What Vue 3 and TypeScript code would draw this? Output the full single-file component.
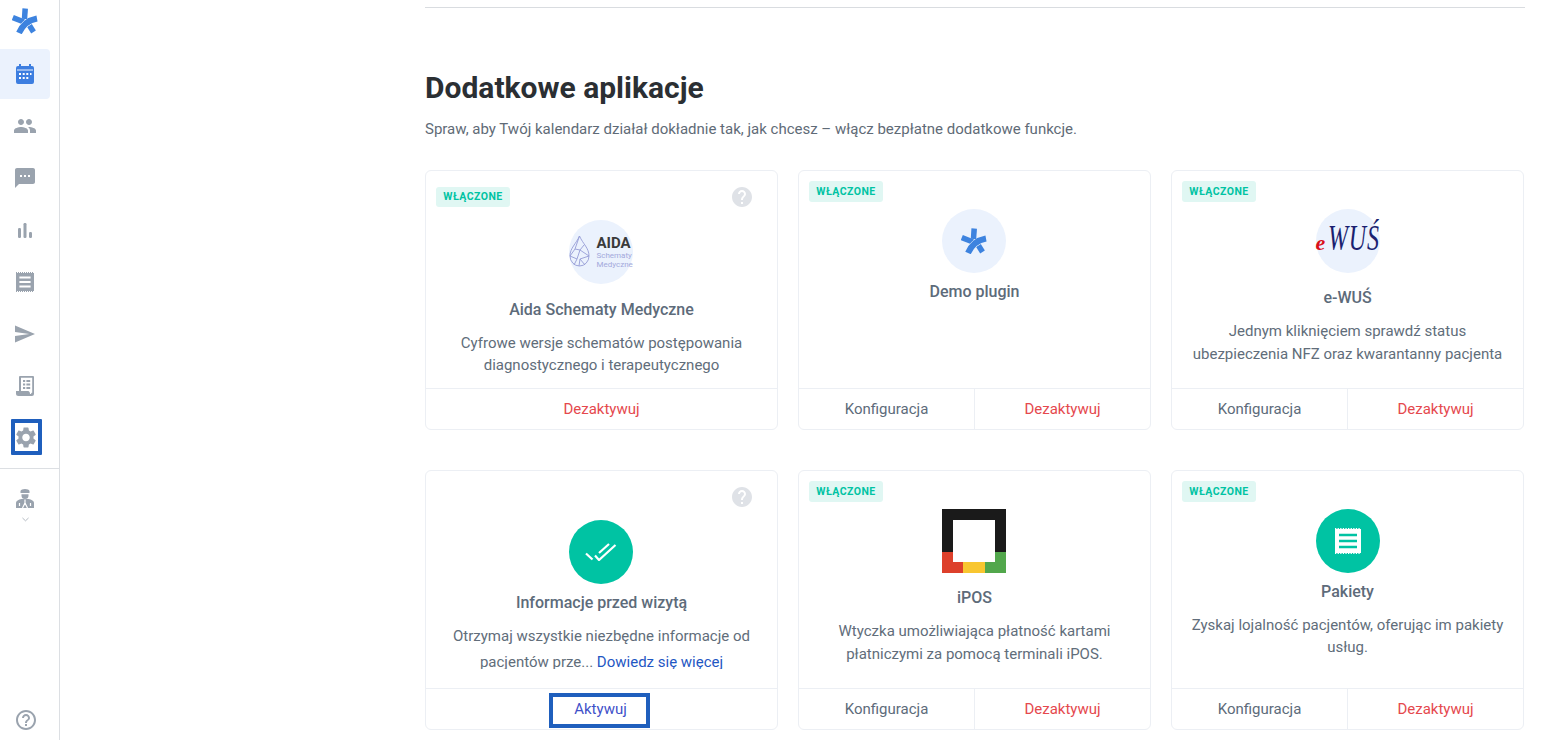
<script setup lang="ts">
interface Plugin {
  key: string;
  title: string;
  desc?: string;
  enabled: boolean;
  help: boolean;
  config: boolean;
}
const star = {
  stem: "M13.200 .5 12.500 11",
  arm: "M.8 9.500 12 14",
  swoosh: "M25 10.500C17 12 10.500 17 7 25",
  stub: "M17.500 17.500 21.500 24",
};
const plugins: Plugin[] = [
  { key: "aida", title: "Aida Schematy Medyczne", desc: "Cyfrowe wersje schematów postępowania diagnostycznego i terapeutycznego", enabled: true, help: true, config: false },
  { key: "demo", title: "Demo plugin", enabled: true, help: false, config: true },
  { key: "ewus", title: "e-WUŚ", desc: "Jednym kliknięciem sprawdź status ubezpieczenia NFZ oraz kwarantanny pacjenta", enabled: true, help: false, config: true },
  { key: "info", title: "Informacje przed wizytą", enabled: false, help: true, config: false },
  { key: "ipos", title: "iPOS", desc: "Wtyczka umożliwiająca płatność kartami płatniczymi za pomocą terminali iPOS.", enabled: true, help: false, config: true },
  { key: "pak", title: "Pakiety", desc: "Zyskaj lojalność pacjentów, oferując im pakiety usług.", enabled: true, help: false, config: true },
];
</script>

<template>
  <div class="page">
    <aside class="side">
      <svg class="logo" viewBox="0 0 26 26" width="26" height="26" fill="none" stroke="#3d83df" stroke-width="5.500">
        <path :d="star.stem" /><path :d="star.arm" /><path :d="star.stub" />
        <path :d="star.swoosh" stroke="#fff" stroke-width="6.800" />
        <path :d="star.swoosh" stroke-width="6" />
      </svg>
      <nav class="nav">
        <div class="item active">
          <svg viewBox="0 0 18 20" width="18" height="20">
            <path fill="#3d7ee0" d="M3 0h2v2h8V0h2v2h1a2 2 0 0 1 2 2v14a2 2 0 0 1-2 2H2a2 2 0 0 1-2-2V4a2 2 0 0 1 2-2h1z" />
            <path stroke="#fff" stroke-width=".9" d="M1 6h16" />
            <path fill="#fff" d="M3 9h2v2H3zM6.700 9h2v2h-2zM10.300 9h2v2h-2zM14 9h1.500v2H14zM3 13h2v2H3zM6.700 13h2v2h-2zM10.300 13h2v2h-2z" />
          </svg>
        </div>
        <div class="item">
          <svg viewBox="1 5 22 14" width="22" height="14"><path fill="#9aa3ae" d="M16 11c1.66 0 2.99-1.34 2.99-3S17.66 5 16 5c-1.66 0-3 1.34-3 3s1.34 3 3 3zm-8 0c1.66 0 2.99-1.34 2.99-3S9.66 5 8 5C6.34 5 5 6.34 5 8s1.34 3 3 3zm0 2c-2.33 0-7 1.17-7 3.5V19h14v-2.5c0-2.33-4.67-3.5-7-3.5zm8 0c-.29 0-.62.02-.97.05 1.16.84 1.97 1.97 1.97 3.45V19h6v-2.5c0-2.33-4.67-3.5-7-3.5z" /></svg>
        </div>
        <div class="item">
          <svg viewBox="2 2 20 20" width="20" height="20"><path fill="#9aa3ae" d="M20 2H4c-1.1 0-1.99.9-1.99 2L2 22l4-4h14c1.1 0 2-.9 2-2V4c0-1.1-.9-2-2-2zM9 11H7V9h2v2zm4 0h-2V9h2v2zm4 0h-2V9h2v2z" /></svg>
        </div>
        <div class="item">
          <svg viewBox="0 0 14 15" width="14" height="15" fill="#9aa3ae"><rect x="0" y="5" width="3" height="10" rx="1.200" /><rect x="5.500" y="0" width="3" height="15" rx="1.200" /><rect x="11" y="9" width="3" height="6" rx="1.200" /></svg>
        </div>
        <div class="item">
          <svg viewBox="0 0 18 20" width="18" height="20">
            <rect x="0" y="1" width="18" height="18" fill="#9aa3ae" />
            <path d="M0 .6h18M0 19.400h18" stroke="#9aa3ae" stroke-width="1.200" stroke-dasharray="1 1" />
            <path d="M3.400 5.500h11.200M3.400 10h11.200M3.400 14.500h11.200" stroke="#fff" stroke-width="2" />
          </svg>
        </div>
        <div class="item">
          <svg viewBox="2 3 21 18" width="20" height="18"><path fill="#9aa3ae" d="M2.010 21 23 12 2.010 3 2 10l15 2-15 2z" /></svg>
        </div>
        <div class="item">
          <svg viewBox="0 0 18 20" width="18" height="20">
            <path fill="#9aa3ae" d="M4 0h13a1 1 0 0 1 1 1v17a2 2 0 0 1-2 2H2.500A2.500 2.500 0 0 1 0 17.500V15h3V1a1 1 0 0 1 1-1z" />
            <path fill="#fff" d="M5 1.800h11.200v15c-.8 0-1 .3-1.200 1.200H14c0-1.600-.6-3-2-3H5z" />
            <path fill="#9aa3ae" d="M7 4h2.200v2H7zM10.400 4h3.800v2h-3.800zM7 7.500h2.200v2H7zM10.400 7.500h3.800v2h-3.800zM7 11h2.200v2H7zM10.400 11h3.800v2h-3.800z" />
          </svg>
        </div>
        <div class="item gear">
          <div class="mark">
            <svg viewBox="2.400 2 19.200 20" width="20" height="21"><path fill="#9aa3ae" d="M19.140 12.940c.04-.3.06-.61.06-.94 0-.32-.02-.64-.07-.94l2.030-1.580a.49.49 0 0 0 .12-.61l-1.920-3.320a.488.488 0 0 0-.59-.22l-2.390.96c-.5-.38-1.030-.7-1.620-.94l-.36-2.540a.484.484 0 0 0-.48-.41h-3.840c-.24 0-.43.17-.47.41l-.36 2.540c-.59.24-1.130.57-1.620.94l-2.390-.96c-.22-.08-.47 0-.59.22L2.740 8.870c-.12.21-.08.47.12.61l2.030 1.580c-.05.3-.09.63-.09.94s.02.64.07.94l-2.030 1.580a.49.49 0 0 0-.12.61l1.920 3.320c.12.22.37.29.59.22l2.390-.96c.5.38 1.030.7 1.620.94l.36 2.540c.05.24.24.41.48.41h3.840c.24 0 .44-.17.47-.41l.36-2.540c.59-.24 1.130-.56 1.620-.94l2.390.96c.22.08.47 0 .59-.22l1.920-3.320c.12-.22.07-.47-.12-.61l-2.010-1.580zM12 15.600c-1.980 0-3.600-1.620-3.600-3.600s1.620-3.600 3.600-3.600 3.600 1.620 3.600 3.600-1.620 3.600-3.600 3.600z" /></svg>
          </div>
        </div>
      </nav>
      <div class="account">
        <svg viewBox="0 0 18 19" width="18" height="19">
          <path fill="#9aa3ae" d="M4.500 4V2C4.500.8 7 0 9 0s4.500.8 4.500 2v2z" />
          <path fill="#9aa3ae" d="M5.500 5.200h7V6.500a3.500 3.500 0 0 1-7 0z" />
          <path fill="#9aa3ae" d="M0 19v-5c0-2 2.500-3.600 5.500-4h7c3 .4 5.500 2 5.500 4v5z" />
          <path fill="none" stroke="#fff" stroke-width="1.200" d="M9 10.500V14M9 14l-2.500 5M9 14l2.500 5M3.500 14v3M14.500 14v3" />
        </svg>
        <svg class="chev" viewBox="0 0 8 5" width="7" height="5" fill="none" stroke="#a9b0b9"><path d="M.5 .7 4 4l3.500-3.300" /></svg>
      </div>
      <svg class="help-out" viewBox="2 2 20 20" width="20" height="20"><path fill="#9aa3ae" d="M11 18h2v-2h-2v2zm1-16C6.480 2 2 6.480 2 12s4.480 10 10 10 10-4.480 10-10S17.520 2 12 2zm0 18c-4.410 0-8-3.590-8-8s3.590-8 8-8 8 3.590 8 8-3.590 8-8 8zm0-14c-2.210 0-4 1.790-4 4h2c0-1.100.9-2 2-2s2 .9 2 2c0 2-3 1.750-3 5h2c0-2.250 3-2.500 3-5 0-2.210-1.790-4-4-4z" /></svg>
    </aside>

    <main class="main">
      <hr class="rule" />
      <h1>Dodatkowe aplikacje</h1>
      <p class="lead">Spraw, aby Twój kalendarz działał dokładnie tak, jak chcesz – włącz bezpłatne dodatkowe funkcje.</p>
      <section class="grid">
        <article v-for="p in plugins" :key="p.key" class="card" :class="'c-' + p.key">
          <span v-if="p.enabled" class="badge">WŁĄCZONE</span>
          <svg v-if="p.help" class="help" viewBox="2 2 20 20" width="20" height="20"><path fill="#dfe2e7" d="M12 2C6.480 2 2 6.480 2 12s4.480 10 10 10 10-4.480 10-10S17.520 2 12 2zm1 17h-2v-2h2v2zm2.070-7.750-.9.92C13.450 12.900 13 13.500 13 15h-2v-.5c0-1.100.45-2.100 1.170-2.830l1.240-1.260c.37-.36.59-.86.59-1.410 0-1.100-.9-2-2-2s-2 .9-2 2H8c0-2.210 1.790-4 4-4s4 1.790 4 4c0 .88-.36 1.680-.93 2.250z" /></svg>
          <div class="body">
            <div class="icon">
              <template v-if="p.key === 'aida'">
                <svg class="drop" viewBox="0 0 21 32" width="21" height="32" fill="none" stroke="#959cd6" stroke-width=".9">
                  <path d="M10.500 1C7 9 1 13 1 21a9.500 10 0 0 0 19 0C20 13 14 9 10.500 1z" />
                  <path d="M10.500 1 6 14l-5 7 7 3 3-9 9 6-9 3-1 7M6 14l5 1 4-5M8 24l-3 6M11 24l5 6" />
                </svg>
                <div class="aida-txt"><b>AIDA</b><span>Schematy</span><span>Medyczne</span></div>
              </template>
              <svg v-else-if="p.key === 'demo'" viewBox="0 0 26 26" width="26" height="26" fill="none" stroke="#3d83df" stroke-width="5.500">
                <path :d="star.stem" /><path :d="star.arm" /><path :d="star.stub" />
                <path :d="star.swoosh" stroke="#ebf2fd" stroke-width="6.800" />
                <path :d="star.swoosh" stroke-width="6" />
              </svg>
              <div v-else-if="p.key === 'ewus'" class="ewus"><i class="e">e</i><i class="wus">WUŚ</i></div>
              <svg v-else-if="p.key === 'info'" viewBox="0 0 32 18" width="32" height="18" fill="none" stroke="#fff" stroke-width="2.200">
                <path d="M1 10.500 7.500 16.500" /><path d="M10 12.500 14 17 30.500 2" /><path d="M14 10 24 1" />
              </svg>
              <svg v-else-if="p.key === 'ipos'" viewBox="0 0 64 64" width="64" height="64">
                <path fill="#1a1a1a" d="M0 0h64v43H53V11H11v32H0z" />
                <path fill="#dd402b" d="M0 43h11v10h10v11H0z" />
                <path fill="#f8c630" d="M21 53h22v11H21z" />
                <path fill="#52a74c" d="M53 43h11v21H43V53h10z" />
              </svg>
              <svg v-else viewBox="0 0 26 26" width="26" height="26">
                <rect x="0" y="1" width="26" height="24" fill="#fff" />
                <path d="M0 .6h26M0 25.400h26" stroke="#fff" stroke-width="1.200" stroke-dasharray="1.300 1.300" />
                <path d="M4 7h18M4 13h18M4 19h18" stroke="#00c3a3" stroke-width="2.400" />
              </svg>
            </div>
            <h2>{{ p.title }}</h2>
            <p v-if="p.desc" class="desc">{{ p.desc }}</p>
            <div v-else-if="p.key === 'info'" class="clip">
              <p>Otrzymaj wszystkie niezbędne informacje od pacjentów prze... <a>Dowiedz się więcej</a></p>
            </div>
          </div>
          <footer class="foot">
            <template v-if="p.enabled">
              <a v-if="p.config" class="act conf">Konfiguracja</a>
              <a class="act off">Dezaktywuj</a>
            </template>
            <a v-else class="act on"><span class="mark2">Aktywuj</span></a>
          </footer>
        </article>
      </section>
    </main>
  </div>
</template>

<style>
html, body { margin: 0; overflow: hidden; background: #fff; }
</style>

<style scoped>
.page { display: flex; height: 740px; overflow: hidden; font-family: Roboto, "Liberation Sans", sans-serif; color: #5d6b7a; }
.side { width: 59px; flex: none; border-right: 1px solid #dcdfe3; display: flex; flex-direction: column; align-items: stretch; }
.logo { display: block; margin: 8px 0 15px 12px; }
.nav { display: flex; flex-direction: column; border-bottom: 1px solid #dcdfe3; padding-bottom: 7px; }
.item { width: 50px; height: 50px; margin-bottom: 2px; display: flex; align-items: center; justify-content: center; }
.active { background: #ebf2fd; border-radius: 0 4px 4px 0; }
.gear { height: 48px; margin: 0; }
.mark { box-sizing: border-box; width: 31px; height: 36px; margin-left: 2px; border: 4px solid #1f5fbd; border-radius: 1px; display: flex; align-items: center; justify-content: center; }
.account { display: flex; flex-direction: column; align-items: center; gap: 9px; width: 50px; margin-top: 20px; }
.help-out { margin: auto 0 10px 16px; }
.main { margin-left: 365px; width: 1100px; flex: none; }
.rule { margin: 7px 0 0; border: 0; border-top: 1px solid #d9dce0; }
h1 { margin: 60px 0 0; font-size: 30px; line-height: 40px; font-weight: 700; color: #2b2f33; }
.lead { margin: 10px 0 0; font-size: 15px; line-height: 22px; color: #5f6b77; }
.grid { display: grid; grid-template-columns: repeat(3, 353px); column-gap: 20px; row-gap: 40px; margin-top: 30px; }
.card { position: relative; box-sizing: border-box; height: 260px; background: #fff; border: 1px solid #eceff4; border-radius: 6px; display: flex; flex-direction: column; }
.badge { position: absolute; left: 10px; top: 10px; width: 74px; height: 21px; border-radius: 3px; background: #e0f7f3; color: #00c3a3; font-size: 10.500px; font-weight: 700; letter-spacing: .45px; line-height: 21px; text-align: center; }
.help { position: absolute; right: 25px; top: 16px; }
.c-aida .badge { top: 16px; height: 20px; line-height: 20px; }
.body { flex: 1; display: flex; flex-direction: column; align-items: center; text-align: center; padding: 38px 14px 0; min-height: 0; box-sizing: border-box; }
.c-aida .body, .c-info .body { padding-top: 49px; }
.icon { position: relative; width: 64px; height: 64px; flex: none; border-radius: 50%; background: #ebf2fd; display: flex; align-items: center; justify-content: center; }
.c-aida .icon, .c-demo .icon, .c-info .icon, .c-ipos .icon { margin-left: -2px; }
.c-info .icon, .c-pak .icon { background: #00c3a3; }
.c-ipos .icon { border-radius: 0; background: none; }
h2 { margin: 7px 0 0; font-size: 16px; line-height: 24px; font-weight: 500; color: #5d6b7a; white-space: nowrap; }
.c-aida h2 { margin-top: 14px; }
.c-ewus h2, .c-ipos h2 { margin-top: 13px; }
.desc, .clip p { margin: 0; font-size: 15px; line-height: 22.500px; color: #616d7a; }
.desc { margin-top: 10px; }
.c-aida .desc, .c-pak .desc { margin-top: 9.500px; }
.c-ipos .desc { width: 300px; }
.clip { margin-top: 8px; height: 46px; overflow: hidden; }
.clip p { line-height: 26px; }
.clip a { color: #1f57c3; }
.foot { height: 40px; flex: none; border-top: 1px solid #eceff4; display: flex; }
.act { flex: 1; display: flex; align-items: center; justify-content: center; font-size: 15px; }
.conf { color: #5d6b7a; border-right: 1px solid #eceff4; }
.off { color: #e5484d; }
.on { color: #3f51c9; align-items: flex-start; }
.mark2 { box-sizing: border-box; width: 101px; height: 35px; margin: 4px 5px 0 0; padding: 0 0 3px 3px; border: 4px solid #1f5fbd; display: flex; align-items: center; justify-content: center; }
.drop { position: absolute; left: 0; top: 15px; }
.aida-txt { position: absolute; left: 28px; top: 16px; display: flex; flex-direction: column; align-items: flex-start; white-space: nowrap; font-size: 8px; line-height: 9px; color: #a3a9dc; }
.aida-txt b { font-size: 15px; line-height: 15px; font-weight: 700; color: #3a3a3a; }
.ewus { position: absolute; left: 0; top: 13px; display: flex; align-items: baseline; white-space: nowrap; font-family: "Liberation Serif", serif; line-height: 36px; color: #1a1f70; }
.ewus .e { color: #d9101a; font-size: 22px; font-weight: 700; }
.ewus .wus { display: inline-block; font-size: 30px; letter-spacing: 1px; transform: translateY(2px) scale(.8, 1.2); transform-origin: left bottom; margin-left: 3px; }
</style>
